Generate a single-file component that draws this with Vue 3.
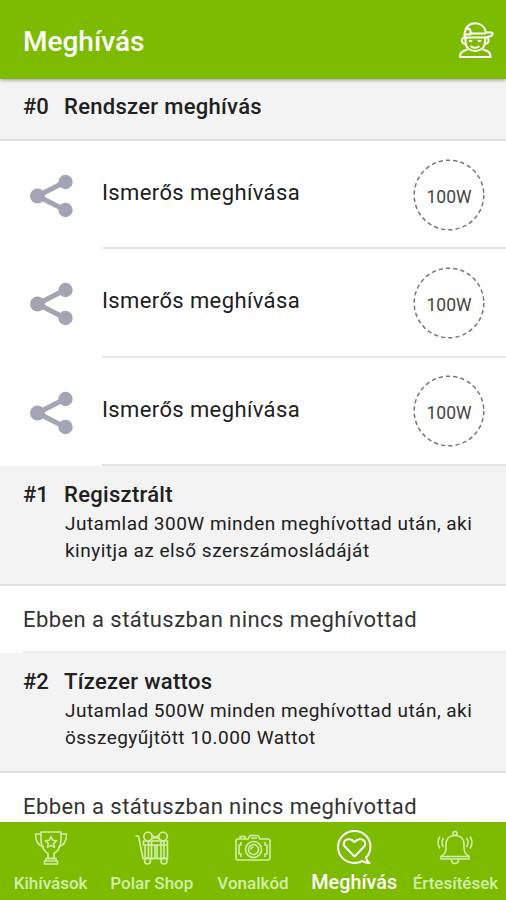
<script setup>
import { ref } from 'vue'

const activeTab = ref('invite')

const sections = [
  {
    id: 0,
    title: 'Rendszer meghívás',
    invites: [
      { id: 1, name: 'Ismerős meghívása', reward: '100W' },
      { id: 2, name: 'Ismerős meghívása', reward: '100W' },
      { id: 3, name: 'Ismerős meghívása', reward: '100W' },
    ],
  },
  {
    id: 1,
    title: 'Regisztrált',
    lines: ['Jutamlad 300W minden meghívottad után, aki', 'kinyitja az első szerszámosládáját'],
    invites: [],
  },
  {
    id: 2,
    title: 'Tízezer wattos',
    lines: ['Jutamlad 500W minden meghívottad után, aki', 'összegyűjtött 10.000 Wattot'],
    invites: [],
  },
]

const tabs = [
  { id: 'challenges', label: 'Kihívások' },
  { id: 'shop', label: 'Polar Shop' },
  { id: 'barcode', label: 'Vonalkód' },
  { id: 'invite', label: 'Meghívás' },
  { id: 'alerts', label: 'Értesítések' },
]
</script>

<template>
  <div class="screen">
    <header class="app-bar">
      <h1>Meghívás</h1>
      <svg class="avatar" viewBox="0 0 38 38" width="38" height="38">
        <path d="M7.500 14.500C7.500 6.500 12 2.200 18 2.200S28 6 29 11.500h5.500c1.500 0 1.500 2.500-.5 3.500L29 16.500H7.500z" />
        <path d="M13 12.500h16M8.500 9.500c1-2.500 5-2.500 5 1v3H8M10.500 6v3" />
        <path d="M8 16.500c-4 0-4.500 6 .8 6.500M28.500 16.500c4 0 4.500 6-.8 6.500" />
        <path d="M8.500 17v4c0 5.500 4 9 9.700 9s9.800-3.500 9.800-9v-4" />
        <path d="M12 20.500q1.500-1.500 3 0M21 20.500q1.500-1.500 3 0M13.500 25q4.500 3.500 9 0" />
        <path d="M10.500 28.500l-4 1.500q-3.500 1.500-3.500 6h30.500q0-4.500-3.500-6l-4-1.500" />
      </svg>
    </header>

    <main class="content">
      <section v-for="section in sections" :key="section.id">
        <div :class="['section-head', { detailed: section.lines }]">
          <span class="number">#{{ section.id }}</span>
          <div>
            <h2>{{ section.title }}</h2>
            <p v-if="section.lines" class="description">
              <span v-for="line in section.lines" :key="line">{{ line }}</span>
            </p>
          </div>
        </div>

        <div v-for="invite in section.invites" :key="invite.id" class="invite">
          <svg class="share" viewBox="0 0 44 44" width="44" height="44">
            <path d="M35 8L7.500 22 35 36" />
            <circle cx="35.500" cy="8" r="7.200" />
            <circle cx="7.500" cy="22" r="7.500" />
            <circle cx="35.500" cy="36" r="7.200" />
          </svg>
          <div class="invite-body">
            <span class="name">{{ invite.name }}</span>
            <div class="reward">
              <svg viewBox="0 0 72 72" width="72" height="72">
                <circle cx="36" cy="36" r="34.800" />
              </svg>
              <span>{{ invite.reward }}</span>
            </div>
          </div>
        </div>

        <div v-if="!section.invites.length" class="empty">
          <p>Ebben a státuszban nincs meghívottad</p>
        </div>
      </section>
    </main>

    <nav class="tabs">
      <button
        v-for="tab in tabs"
        :key="tab.id"
        :class="['tab', { active: activeTab === tab.id }]"
        @click="activeTab = tab.id"
      >
        <svg viewBox="0 0 36 36" width="36" height="36">
          <g v-if="tab.id === 'challenges'">
            <path d="M8 2h20v8c0 7-4 12-7 13.500v5h-6v-5C12 22 8 17 8 10z" />
            <path d="M8 4H2.500c0 7 3 12 8.500 13M28 4h5.500c0 7-3 12-8.500 13" />
            <path d="M18 6.500l1.700 3.700 4 .5-3 2.700.8 4-3.500-2-3.500 2 .8-4-3-2.700 4-.5z" />
            <path d="M13 28.500h10v2.500H13zM11.500 31h13v3h-13z" />
          </g>
          <g v-else-if="tab.id === 'shop'">
            <path d="M1.500 6H4.500l4.500 22.500h25" />
            <path d="M9.500 11h24v4h-24zM11 15h10v13.500H11zM23 15h10.500v13.500H23zM14.500 11v17M17.500 11v17M27 11v17M30 11v17" />
            <circle cx="14" cy="6.500" r="4.200" />
            <circle cx="29" cy="6.500" r="4.200" />
            <path d="M17.500 5l4 2.500 4-2.500M17.500 9l4-1.500 4 1.500" />
            <circle cx="13.500" cy="31" r="3" />
            <circle cx="30" cy="31" r="3" />
          </g>
          <g v-else-if="tab.id === 'barcode'">
            <path d="M3 9h10l2-3.500h8L25 9h8q2 0 2 2v17q0 2-2 2H3q-2 0-2-2V11q0-2 2-2z" />
            <path d="M5 9V6.500h5V9M16 8h6" />
            <path d="M6 12v3h-2v9h2v3M30 12v3h2v9h-2v3" />
            <circle cx="18.500" cy="19.500" r="8" />
            <circle cx="18.500" cy="19.500" r="5" />
            <path d="M16 19.500q0-2.500 2.500-2.500" />
          </g>
          <g v-else-if="tab.id === 'invite'">
            <path d="M30 27.500c3-3 4.500-6.500 4.500-10.500C34.500 8 27.500 1 18.500 1S2 8 2 17s7.500 16 16.500 16c3 0 5.500-.7 8-2 2 1.500 4.500 2 7 2-2-1.500-3.300-3.500-3.500-5.500z" />
            <path d="M18.500 26.500L9.500 17.300C4 11.500 12.500 5.500 18.500 12c6-6.500 14.500-.5 9 5.300z" />
          </g>
          <g v-else>
            <path d="M4 26.500c3-2 5-4 5-8v-4c0-5 3-9 9-9s9 4 9 9v4c0 4 2 6 5 8v2.500H4zM5 26.500h26" />
            <circle cx="18" cy="3.500" r="2" />
            <path d="M14.500 29.500q0 4 3.500 4t3.500-4" />
            <path d="M6.500 8q-3 4.500 0 9M3 6.500q-4 6 0 12M29.500 8q3 4.500 0 9M33 6.500q4 6 0 12" />
          </g>
        </svg>
        <span>{{ tab.label }}</span>
      </button>
    </nav>
  </div>
</template>

<style>
body {
  margin: 0;
}
</style>

<style scoped>
.screen {
  display: flex;
  flex-direction: column;
  height: 900px;
  overflow: hidden;
  background: #fff;
  color: #202020;
  font-family: Roboto, sans-serif;
}
h1,
h2,
p {
  margin: 0;
}
svg {
  display: block;
  overflow: visible;
  fill: none;
  stroke: currentColor;
  stroke-linejoin: round;
}
.app-bar {
  position: relative;
  flex: none;
  display: flex;
  justify-content: space-between;
  box-sizing: border-box;
  height: 79px;
  padding: 21px 11px 0 23px;
  background: #7dbb00;
  color: #fff;
  box-shadow: 0 1px 4px rgba(0, 0, 0, 0.4);
}
h1 {
  font-size: 28px;
  font-weight: 500;
  line-height: 42px;
}
.avatar {
  stroke-width: 2;
}
.content {
  flex: 1;
  min-height: 0;
  overflow: hidden;
}
.section-head {
  display: flex;
  padding: 14px 0 18px 23px;
  background: #f3f3f3;
  border-bottom: 2px solid #e0e0e0;
}
.section-head.detailed {
  padding: 15px 0 20px 23px;
}
.number,
h2 {
  font-size: 22px;
  font-weight: 500;
  line-height: 28px;
}
.number {
  width: 41px;
}
h2 {
  letter-spacing: 0.3px;
}
.description {
  padding: 1px 0 0 1px;
  font-size: 19px;
  line-height: 27px;
  letter-spacing: 0.48px;
}
.description span {
  display: block;
  white-space: nowrap;
}
.invite {
  display: flex;
  height: 108.300px;
}
.share {
  flex: none;
  margin: 33px 28px 0 30px;
  color: #a2a5b3;
  stroke-width: 5;
}
.share circle {
  fill: currentColor;
  stroke: none;
}
.invite-body {
  flex: 1;
  display: flex;
  justify-content: space-between;
  box-sizing: border-box;
  padding-right: 21px;
  border-bottom: 2px solid #e6e6e6;
}
.name {
  padding-top: 38px;
  font-size: 22px;
  line-height: 28px;
  letter-spacing: 0.38px;
}
.reward {
  display: grid;
  place-items: center;
  width: 72px;
  height: 72px;
  margin-top: 17.500px;
  font-size: 17.500px;
  color: #444;
}
.reward > * {
  grid-area: 1 / 1;
}
.reward span {
  padding-top: 4px;
}
.reward circle {
  stroke: #777;
  stroke-width: 1.500;
  stroke-dasharray: 4.300 3;
}
.empty {
  padding-left: 23px;
}
.empty p {
  box-sizing: border-box;
  height: 67px;
  padding-top: 20px;
  border-bottom: 2px solid #ebebeb;
  font-size: 22px;
  line-height: 28px;
  letter-spacing: 0.43px;
  color: #333;
}
.tabs {
  flex: none;
  display: grid;
  grid-template-columns: repeat(5, 1fr);
  height: 78px;
  background: #7dbb00;
}
.tab {
  display: flex;
  flex-direction: column;
  align-items: center;
  padding: 8px 0 0;
  border: 0;
  background: none;
  color: #d3edaa;
  font: 500 17px/24px Roboto, sans-serif;
  white-space: nowrap;
  cursor: pointer;
}
.tab svg {
  stroke-width: 1.600;
}
.tab span {
  margin-top: 5px;
}
.tab.active {
  color: #fff;
  font-size: 19.800px;
}
.tab.active svg {
  stroke-width: 2;
}
</style>
